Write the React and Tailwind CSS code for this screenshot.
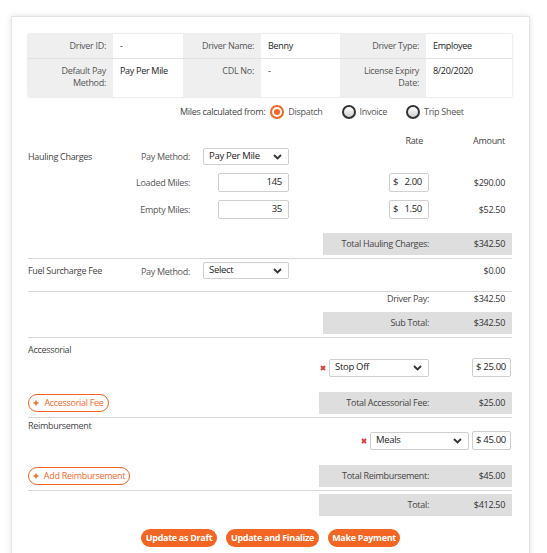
import React from "react";

const orange = "#f26522";

const Chevron = () => (
  <svg width="9" height="6" viewBox="0 0 9 6" className="shrink-0">
    <path d="M1 1l3.5 3.5L8 1" fill="none" stroke="#333" strokeWidth="1.8" />
  </svg>
);

const Cross = () => (
  <svg width="6" height="6" viewBox="0 0 6 6" className="shrink-0">
    <path d="M1 1l4 4M5 1L1 5" stroke="#e53935" strokeWidth="1.8" />
  </svg>
);

const Plus = () => (
  <svg width="6" height="6" viewBox="0 0 6 6" className="shrink-0">
    <path d="M3 0.5v5M0.5 3h5" stroke={orange} strokeWidth="1.4" />
  </svg>
);

const Select = ({ value, className = "" }) => (
  <div
    className={`flex items-center justify-between border border-[#cfcfcf] rounded-[2px] bg-white pl-[5px] pr-[6px] text-[9.5px] text-[#222] ${className}`}
  >
    <span>{value}</span>
    <Chevron />
  </div>
);

const MoneyInput = ({ value, className = "" }) => (
  <div
    className={`flex items-center justify-between border border-[#cfcfcf] rounded-[2px] bg-white pl-[3px] pr-[4px] text-[9.5px] text-[#222] ${className}`}
  >
    <span>$</span>
    <span>{value}</span>
  </div>
);

const Radio = ({ label, checked }) => (
  <div className="flex items-center gap-[4px]">
    {checked ? (
      <span className="w-[14px] h-[14px] rounded-full border-2 border-[#f26522] bg-white flex items-center justify-center">
        <span className="w-[6px] h-[6px] rounded-full bg-[#f26522]" />
      </span>
    ) : (
      <span className="w-[14px] h-[14px] rounded-full border-2 border-[#333] bg-linear-to-b from-white to-[#d0d0d0]" />
    )}
    <span className="text-[#555]">{label}</span>
  </div>
);

const TotalBox = ({ label, value, wide }) => (
  <div
    className={`flex items-center h-[22px] bg-[#dedede] ${wide ? "w-[193px]" : "w-[189px]"}`}
  >
    <span className="flex-1 text-right text-[#444]">{label}</span>
    <span className="w-[83px] pr-[7px] text-right text-[#333]">{value}</span>
  </div>
);

const Divider = ({ className = "" }) => <div className={`h-px bg-[#d6d6d6] ${className}`} />;

const OutlineButton = ({ label, className = "" }) => (
  <button
    className={`flex items-center justify-center gap-[5px] h-[18px] rounded-full border border-[#f26522] text-[#f26a2e] bg-white ${className}`}
  >
    <Plus />
    <span>{label}</span>
  </button>
);

const infoCells = [
  ["Driver ID:", "-", "Driver Name:", "Benny", "Driver Type:", "Employee"],
  ["Default Pay Method:", "Pay Per Mile", "CDL No:", "-", "License Expiry Date:", "8/20/2020"],
];

export default function App() {
  return (
    <div
      className="bg-white min-h-[553px] pt-[16px] text-[9px] tracking-[-0.3px] text-[#444]"
      style={{ fontFamily: '"Open Sans", "Liberation Sans", sans-serif' }}
    >
      <div className="ml-[11px] w-[519px] min-h-[560px] bg-white border border-[#e4e4e4] shadow-[0_0_6px_rgba(0,0,0,0.12)] pl-[16px] pr-[17px] pt-[17px]">
        {/* Driver info table */}
        <div className="shadow-[0_0_2px_rgba(0,0,0,0.2)]">
          {infoCells.map((row, r) => (
            <div
              key={r}
              className={`grid grid-cols-[85px_70px_78px_79px_86px_86px] ${
                r === 0 ? "h-[25px] items-center border-b border-[#e2e2e2]" : "h-[38px]"
              }`}
            >
              {row.map((cell, c) => (
                <div
                  key={c}
                  className={`h-full flex leading-[12px] ${r === 0 ? "items-center" : "items-start pt-[6px]"} ${
                    c % 2 === 0
                      ? "bg-[#efefef] justify-end text-right pr-[7px] pl-[4px] text-[#555]"
                      : "bg-white pl-[7px] text-[#222]"
                  }`}
                >
                  {cell}
                </div>
              ))}
            </div>
          ))}
        </div>

        {/* Miles calculated from */}
        <div className="mt-[8px] h-[14px] pl-[152px] flex items-center">
          <span className="text-[#444]">Miles calculated from:</span>
          <div className="ml-[5px] flex items-center gap-[19px]">
            <Radio label="Dispatch" checked />
            <Radio label="Invoice" />
            <Radio label="Trip Sheet" />
          </div>
        </div>

        {/* Hauling charges */}
        <div className="mt-[16px] h-[12px] flex items-center">
          <div className="w-[361px]" />
          <div className="w-[40px] pr-[6px] text-right text-[#444]">Rate</div>
          <div className="w-[83px] pr-[7px] text-right text-[#444]">Amount</div>
        </div>
        <div className="mt-[1px] h-[17px] flex items-center">
          <div className="w-[92px]">Hauling Charges</div>
          <div className="w-[70px] text-right text-[#555]">Pay Method:</div>
          <Select value="Pay Per Mile" className="ml-[13px] w-[86px] h-[17px]" />
        </div>
        {[
          ["Loaded Miles:", "145", "2.00", "$290.00"],
          ["Empty Miles:", "35", "1.50", "$52.50"],
        ].map(([label, miles, rate, amount]) => (
          <div key={label} className="mt-[8px] h-[19px] flex items-center">
            <div className="w-[92px]" />
            <div className="w-[70px] text-right text-[#555]">{label}</div>
            <div className="ml-[28px] w-[71px] h-[19px] border border-[#cfcfcf] rounded-[2px] flex items-center justify-end pr-[6px] text-[9.5px] text-[#222]">
              {miles}
            </div>
            <div className="w-[100px]" />
            <MoneyInput value={rate} className="w-[40px] h-[19px] !pr-[6px]" />
            <div className="w-[83px] pr-[7px] text-right text-[#333]">{amount}</div>
          </div>
        ))}
        <div className="mt-[14px] flex justify-end h-[21px]">
          <TotalBox label="Total Hauling Charges:" value="$342.50" />
        </div>
        <Divider className="mt-[4px]" />

        {/* Fuel surcharge */}
        <div className="mt-[3px] h-[17px] flex items-center">
          <div className="w-[92px]">Fuel Surcharge Fee</div>
          <div className="w-[70px] text-right text-[#555] pt-[3px]">Pay Method:</div>
          <Select value="Select" className="ml-[13px] w-[86px] h-[17px]" />
          <div className="flex-1 pr-[7px] text-right text-[#333]">$0.00</div>
        </div>
        <Divider className="mt-[12px]" />

        <div className="h-[14px] flex items-center justify-end">
          <span className="text-[#444]">Driver Pay:</span>
          <span className="w-[83px] pr-[7px] text-right text-[#333]">$342.50</span>
        </div>
        <div className="mt-[6px] flex justify-end">
          <TotalBox label="Sub Total:" value="$342.50" />
        </div>
        <Divider className="mt-[3px]" />

        {/* Accessorial */}
        <div className="mt-[6px] h-[12px] flex items-center">Accessorial</div>
        <div className="mt-[2px] h-[19px] flex items-center pl-[292px]">
          <Cross />
          <Select value="Stop Off" className="ml-[3px] w-[100px] h-[18px]" />
          <MoneyInput value="25.00" className="ml-[43px] w-[39px] h-[19px]" />
        </div>
        <div className="mt-[15px] h-[22px] flex items-center">
          <OutlineButton label="Accessorial Fee" className="w-[81px]" />
          <div className="ml-auto">
            <TotalBox label="Total Accessorial Fee:" value="$25.00" wide />
          </div>
        </div>
        <Divider className="mt-[3px]" />

        {/* Reimbursement */}
        <div className="mt-[2px] h-[11px] flex items-center">Reimbursement</div>
        <div className="h-[19px] flex items-center pl-[333px]">
          <Cross />
          <Select value="Meals" className="ml-[3px] w-[99px] h-[18px]" />
          <MoneyInput value="45.00" className="ml-[3px] w-[39px] h-[19px]" />
        </div>
        <div className="mt-[15px] h-[22px] flex items-center">
          <OutlineButton label="Add Reimbursement" className="w-[102px]" />
          <div className="ml-auto">
            <TotalBox label="Total Reimbursement:" value="$45.00" wide />
          </div>
        </div>
        <Divider className="mt-[3px]" />
        <div className="mt-[3px] flex justify-end">
          <TotalBox label="Total:" value="$412.50" wide />
        </div>

        {/* Actions */}
        <div className="mt-[13px] flex justify-center gap-[9px] pl-[1px]">
          {[
            ["Update as Draft", "w-[76px]"],
            ["Update and Finalize", "w-[93px]"],
            ["Make Payment", "w-[72px]"],
          ].map(([label, w]) => (
            <button
              key={label}
              className={`${w} h-[18px] rounded-full bg-[#f26522] text-white font-bold flex items-center justify-center`}
            >
              {label}
            </button>
          ))}
        </div>
      </div>
    </div>
  );
}
